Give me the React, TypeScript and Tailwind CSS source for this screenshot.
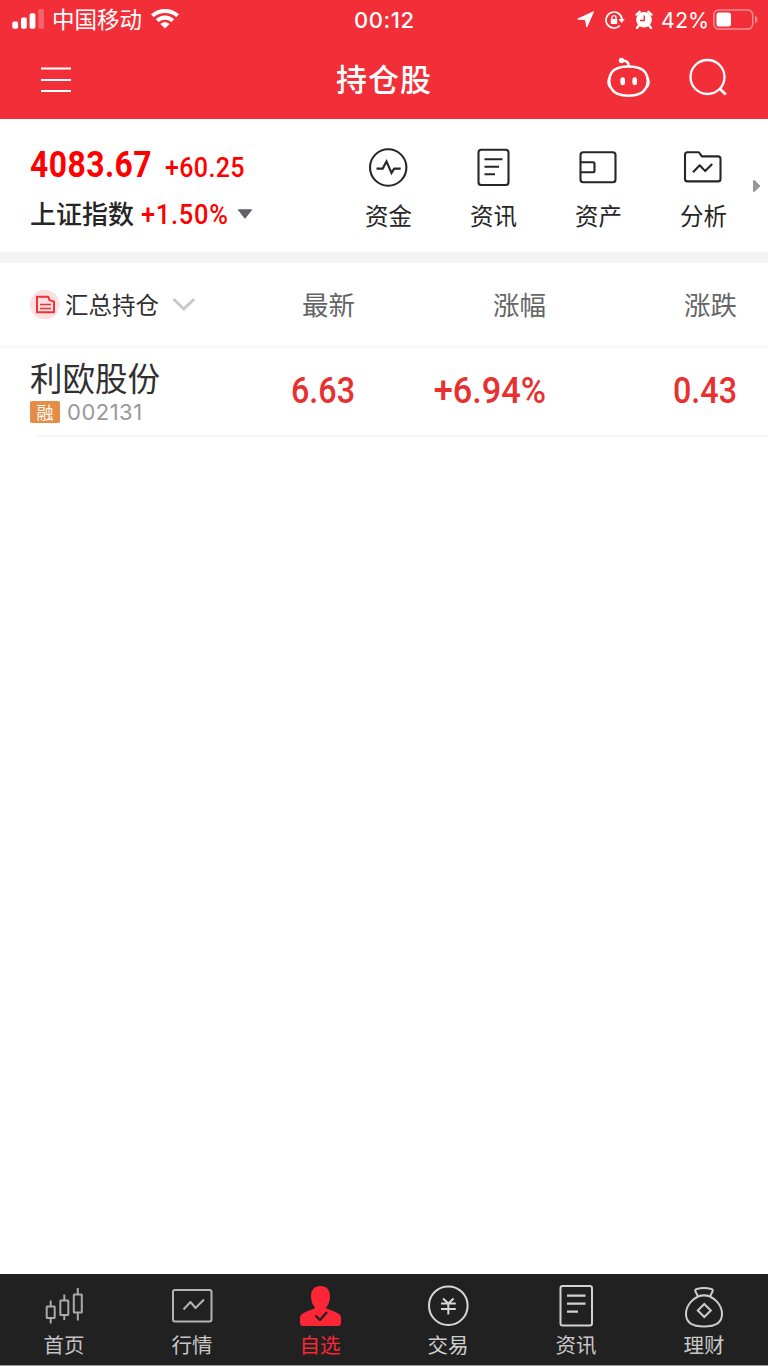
import React from "react";

type IconProps = { box: string; className: string; width?: number; children: React.ReactNode };

function Icon({ box, className, width = 2, children }: IconProps) {
  return (
    <svg
      viewBox={box}
      className={`block shrink-0 ${className}`}
      fill="none"
      stroke="currentColor"
      strokeWidth={width}
      strokeLinejoin="round"
    >
      {children}
    </svg>
  );
}

function StatusBar() {
  return (
    <div className="flex h-10 items-center pb-[2px] pl-3 pr-[10px]">
      <div className="flex w-[342px] items-center">
        <Icon box="0 0 32 20" className="h-5 w-8">
          <g fill="currentColor" stroke="none">
            <rect x="0.3" y="12.5" width="5.8" height="7.2" rx="1.6" />
            <rect x="9" y="8.5" width="5.8" height="11.2" rx="1.6" />
            <rect x="17.6" y="4.3" width="5.8" height="15.4" rx="1.6" />
            <rect x="26.2" y="0" width="5.8" height="19.7" rx="1.6" opacity="0.25" />
          </g>
        </Icon>
        <span className="ml-2 h-8 w-[90px] whitespace-nowrap text-[22.5px] leading-[31px]">中国移动</span>
        <Icon box="0 0 28 20" className="ml-[9px] h-5 w-7">
          <g fill="currentColor" stroke="none">
            <path d="M0 5.2C8-1.700 20-1.700 28 5.200L25.300 8.200C19 2.600 9 2.600 2.700 8.200Z" />
            <path d="M4.700 10.200C10 5.100 18 5.100 23.300 10.200L20.500 13.100C16.800 9.800 11.200 9.800 7.500 13.100Z" />
            <path d="M9.400 15C12 12.600 16 12.600 18.600 15L14 19.600Z" />
          </g>
        </Icon>
      </div>
      <span className="w-[80px] pt-[2px] font-['Inter'] text-[22px] font-medium leading-[38px] tracking-[0.6px]">00:12</span>
      <div className="ml-auto flex items-center">
        <Icon box="0 0 17 17" className="h-[17px] w-[17px]">
          <path d="M16.500.7 9.800 16 8.600 8.700.8 8Z" fill="currentColor" stroke="currentColor" strokeWidth="1" />
        </Icon>
        <Icon box="0 0 20 18" className="ml-[11px] mt-px h-[18px] w-5" width={1.7}>
          <path d="M14.900 14.500A8 8 0 1 1 17 8.200" />
          <path d="M13.500 8h6.300L16.700 12Z" fill="currentColor" stroke="none" />
          <rect x="5.800" y="8" width="6.400" height="5" rx="0.600" fill="currentColor" stroke="none" />
          <path d="M7 8.500V6.700a2 2 0 0 1 4 0v1.800" strokeWidth="1.300" />
        </Icon>
        <Icon box="0 0 18 19" className="ml-[10px] h-[19px] w-[18px]">
          <circle cx="9" cy="9.800" r="7.800" fill="currentColor" stroke="none" />
          <path d="M1.600 4.600 4.600 1.800M16.400 4.600 13.400 1.800M3.800 15.500 2 18M14.200 15.500 16 18" strokeWidth="2.400" strokeLinecap="round" />
          <path d="M9.300 5.400V10.500H5" stroke="#f22f38" strokeWidth="1.400" />
        </Icon>
        <span className="ml-2 w-[52px] whitespace-nowrap pt-[2px] font-['Inter'] text-[21.5px] leading-[38px]">42%</span>
        <Icon box="0 0 45 21" className="h-[21px] w-[45px]">
          <rect x="0.900" y="0.900" width="38.800" height="19.200" rx="5" strokeWidth="1.500" opacity="0.45" />
          <path d="M42 6.800c3.200 1.200 3.200 6.200 0 7.400Z" fill="currentColor" stroke="none" opacity="0.45" />
          <rect x="3.500" y="3.500" width="14.500" height="14" rx="2.500" fill="currentColor" stroke="none" />
        </Icon>
      </div>
    </div>
  );
}

function TitleBar() {
  return (
    <div className="flex h-[79px] items-center">
      <div className="flex w-[256px] pl-[41px]">
        <Icon box="0 0 30 26" className="h-[26px] w-[30px]" width={1.8}>
          <path d="M0 1.500h30M0 13h30M0 24h30" />
        </Icon>
      </div>
      <h1 className="w-[256px] pb-1 text-center text-[31px] font-medium leading-[72px] tracking-[1px]">持仓股</h1>
      <div className="flex w-[256px] items-center pb-1 pl-[95px]">
        <Icon box="607 57 44 42" className="h-[42px] w-11" width={2.5}>
          <path d="M628.500 66.500c9 0 14.500 2.200 17 6.200 3 4.500 3 11.500 0 16-2.500 4.500-8 7-17 7s-14.500-2.500-17-7c-3-4.500-3-11.500 0-16 2.500-4 8-6.200 17-6.200Z" />
          <path d="M610.500 77c-2.600 1.500-2.600 8.500 0 10M646.500 77c2.600 1.500 2.600 8.500 0 10" />
          <path d="M628.700 66c0-4-2-5.500-6.500-5.500" />
          <circle cx="621.500" cy="60.500" r="2.700" fill="currentColor" stroke="none" />
          <path d="M622.700 79.500v3.500M634.700 79.500v3.500" strokeWidth="4.600" strokeLinecap="round" />
        </Icon>
        <Icon box="689 57 40 42" className="ml-[38px] h-[42px] w-10" width={2.3}>
          <circle cx="707.500" cy="77" r="17" />
          <path d="m719.500 88.500 6.300 6" strokeWidth="2.800" />
        </Icon>
      </div>
    </div>
  );
}

const shortcuts = [
  {
    label: "资金",
    icon: (
      <Icon box="367 147 42 42" className="h-[42px] w-[42px]" width={2.1}>
        <circle cx="388.200" cy="167.500" r="18.200" />
        <path d="M376.500 168.600h6.200l3.800-7.200 5 11.500 2.700-4.300h6.500" strokeLinejoin="miter" />
      </Icon>
    ),
  },
  {
    label: "资讯",
    icon: (
      <Icon box="472 147 42 42" className="h-[42px] w-[42px]" width={2.1}>
        <rect x="478.500" y="149.800" width="30" height="35.200" rx="2.800" />
        <path d="M484.500 159.300h18M484.500 166.800h14.500M484.500 174.200h10.500" />
      </Icon>
    ),
  },
  {
    label: "资产",
    icon: (
      <Icon box="577 147 42 42" className="h-[42px] w-[42px]" width={2.1}>
        <rect x="580.500" y="152.200" width="35" height="30" rx="2.800" />
        <path d="M580.500 162.300h12.500q1.500 0 1.500 1.500v7q0 1.500-1.500 1.500h-12.500" />
      </Icon>
    ),
  },
  {
    label: "分析",
    icon: (
      <Icon box="682 147 42 42" className="h-[42px] w-[42px]" width={2.1}>
        <path d="M687.500 152.200H698q1 0 1.500.8l2.300 3.400h16.200q2.500 0 2.500 2.500v20q0 2.500-2.500 2.500h-30.500q-2.500 0-2.500-2.500v-24.200q0-2.500 2.500-2.500Z" />
        <path d="m693 172.200 6.700-6.900 5.500 5.800 7-7" />
      </Icon>
    ),
  },
];

function IndexPanel() {
  return (
    <section className="flex h-[144px] border-b-[11px] border-[#f4f4f4] bg-white">
      <div className="w-[335px] pl-[30px] pt-[26px] font-['Roboto','Noto_Sans_CJK_SC',sans-serif] text-[#fe0000]">
        <div className="flex h-[42px] items-baseline">
          <span className="w-[135px] origin-left scale-x-[0.885] text-[36px] font-bold leading-[41px] tracking-[0.5px]">4083.67</span>
          <span className="origin-left scale-x-[0.91] text-[27.5px] font-medium tracking-[0.4px]">+60.25</span>
        </div>
        <div className="flex h-[54px] items-center">
          <span className="w-[111px] pt-[3px] text-[26px] font-medium leading-[55px] text-[#262626]">上证指数</span>
          <span className="w-[96px] origin-left scale-x-[0.94] pt-[2px] text-[27px] font-medium tracking-[0.8px]">+1.50%</span>
          <Icon box="0 0 16 10" className="h-[10px] w-4">
            <path d="M1.300.800h13.400L8 9.300Z" fill="#616366" stroke="#616366" strokeWidth="1" />
          </Icon>
        </div>
      </div>
      <div className="flex w-[420px] pt-[28px]">
        {shortcuts.map((s) => (
          <div key={s.label} className="flex w-[105px] flex-col items-center text-[#262626]">
            {s.icon}
            <span className="mt-[6px] pl-[2px] text-[23.5px] leading-10">{s.label}</span>
          </div>
        ))}
      </div>
      <Icon box="0 0 8 12" className="-ml-[2px] mt-[61px] h-3 w-2">
        <path d="M.500.500 1.500.500 7 6 1.500 11.500.500 11.500Z" fill="#999" stroke="#999" strokeWidth="1" />
      </Icon>
    </section>
  );
}

function Holdings() {
  return (
    <main className="h-[1011px] bg-white">
      <div className="flex h-[85px] items-center border-b-2 border-[#f8f8f8] pl-[30px] pr-[31px] text-[26.500px] text-[#666]">
        <div className="flex w-[174px] items-center text-[#303030]">
          <Icon box="30 290 30 30" className="h-[30px] w-[30px] text-[#ef3138]">
            <circle cx="44.800" cy="304.500" r="14.700" fill="#fcdfe1" stroke="none" />
            <path d="M37 296.800h11.300l1.200 3.300 4.500 1.500v10.700H37Z" />
            <path d="M40 304.500h11M40 308.500h11" strokeWidth="1.500" />
          </Icon>
          <span className="ml-[5px] w-[107px] whitespace-nowrap pb-px text-[23.500px] leading-[79px]">汇总持仓</span>
          <Icon box="0 0 24 16" className="h-4 w-6" width={3}>
            <path d="m1.500 2 10.300 10L22.200 2" stroke="#c8c8c8" strokeLinejoin="miter" />
          </Icon>
        </div>
        <span className="w-[151px] pb-[2px] text-right">最新</span>
        <span className="w-[191px] pb-[2px] text-right">涨幅</span>
        <span className="w-[191px] pb-[2px] text-right">涨跌</span>
      </div>
      <div className="flex h-[87px] items-center pl-[30px] pr-[31px] font-['Roboto'] text-[36.500px] font-medium text-[#e93030]">
        <div className="flex w-[174px] flex-col pb-[6px] font-['Noto_Sans_CJK_SC'] font-normal">
          <span className="h-[46px] text-[32.500px] leading-[44px] text-[#303030]">利欧股份</span>
          <div className="flex h-[22px] items-center">
            <span className="flex h-[22px] w-[30px] items-center justify-center rounded-[2px] bg-[#e68c46] text-[17px] leading-[22px] text-white">融</span>
            <span className="ml-[7px] font-['Inter'] text-[22px] leading-[22px] tracking-[0.5px] text-[#999]">002131</span>
          </div>
        </div>
        <span className="w-[151px] origin-right scale-x-[0.885] pb-px text-right">6.63</span>
        <span className="w-[191px] origin-right scale-x-[0.94] pb-px text-right">+6.94%</span>
        <span className="w-[191px] origin-right scale-x-[0.885] pb-px text-right">0.43</span>
      </div>
      <div className="ml-[37px] h-[2px] bg-[#f8f8f8]" />
    </main>
  );
}

const tabs = [
  {
    label: "首页",
    color: "text-[#c2c2c2]",
    icon: (
      <Icon box="42 1284 44 44" className="h-11 w-11 text-[#aaa]">
        <rect x="46.700" y="1306.500" width="8" height="11.500" rx="0.500" />
        <rect x="60.300" y="1300.500" width="8" height="14.500" rx="0.500" />
        <rect x="73.800" y="1294.500" width="8" height="18" rx="0.500" />
        <path d="M50.700 1300.500v6M50.700 1318v5.500M64.300 1294.500v6M64.300 1315v5M77.800 1288v6.500M77.800 1312.500v8" />
      </Icon>
    ),
  },
  {
    label: "行情",
    color: "text-[#c8c8c8]",
    icon: (
      <Icon box="170 1284 44 44" className="h-11 w-11 text-[#b4b4b4]">
        <rect x="173" y="1290" width="38.500" height="31.500" rx="2" />
        <path d="m183.500 1309.500 7-7.500 5 6 8.500-8.500" />
      </Icon>
    ),
  },
  {
    label: "自选",
    color: "text-[#fc2637]",
    icon: (
      <Icon box="298 1284 44 44" className="h-11 w-11 text-[#fc2637]">
        <path
          d="M320.500 1286c6 0 9.500 4 9.500 10 0 5-1.500 9-4 11.500.5 1 1.500 1.500 3 2 8 3 12 4.500 12 8.500v5q0 3-3 3h-35q-3 0-3-3v-5c0-4 4-5.500 12-8.500 1.500-.5 2.500-1 3-2-2.500-2.500-4-6.500-4-11.500 0-6 3.500-10 9.500-10Z"
          fill="currentColor"
          stroke="none"
        />
        <path d="m315.500 1315.500 4.500 4.500 7-8" stroke="#212121" strokeWidth="2.300" />
      </Icon>
    ),
  },
  {
    label: "交易",
    color: "text-[#d0d0d0]",
    icon: (
      <Icon box="426 1284 44 44" className="h-11 w-11 text-[#d6d6d6]">
        <circle cx="448.300" cy="1305.700" r="19.300" />
        <path d="m443 1298.500 5.300 5 5.300-5M448.300 1303.500v11M441 1303.500h14.800M441 1309h14.800" />
      </Icon>
    ),
  },
  {
    label: "资讯",
    color: "text-[#c8c8c8]",
    icon: (
      <Icon box="554 1284 44 44" className="h-11 w-11 text-[#d2d2d2]">
        <rect x="560.500" y="1286" width="31.500" height="39.500" rx="2.200" />
        <path d="M567 1295.700h18.500M567 1303.700h18.500M567 1311.700h11" strokeWidth="2.300" />
      </Icon>
    ),
  },
  {
    label: "理财",
    color: "text-[#c8c8c8]",
    icon: (
      <Icon box="682 1284 44 44" className="h-11 w-11 text-[#ccc]">
        <path d="M698 1296.500c-3 1.500-12 7-12 17.500 0 8 5 12.500 18 12.500s18-4.500 18-12.500c0-10.500-9-16-12-17.500M698 1296.500c4-1.500 8-1.500 12 0M698 1296.500l-2.500-5c-.7-1.500 0-2.200 1.200-2.500 5-1.200 9.600-1.200 14.600 0 1.200.3 1.900 1 1.200 2.500l-2.500 5" />
        <path d="m704.300 1304 6.500 6.500-6.500 6.500-6.500-6.500Z" strokeLinejoin="miter" />
      </Icon>
    ),
  },
];

function TabBar() {
  return (
    <nav className="flex h-[92px] border-b border-[#999] bg-[#212121] pt-[10px]">
      {tabs.map((t) => (
        <div key={t.label} className={`flex w-32 flex-col items-center ${t.color}`}>
          {t.icon}
          <span className="text-[20.500px] leading-8">{t.label}</span>
        </div>
      ))}
    </nav>
  );
}

export default function App() {
  return (
    <div className="h-[1366px] w-[768px] overflow-hidden bg-white font-['Noto_Sans_CJK_SC',sans-serif]">
      <header className="bg-[#f22f38] text-white">
        <StatusBar />
        <TitleBar />
      </header>
      <IndexPanel />
      <Holdings />
      <TabBar />
    </div>
  );
}
